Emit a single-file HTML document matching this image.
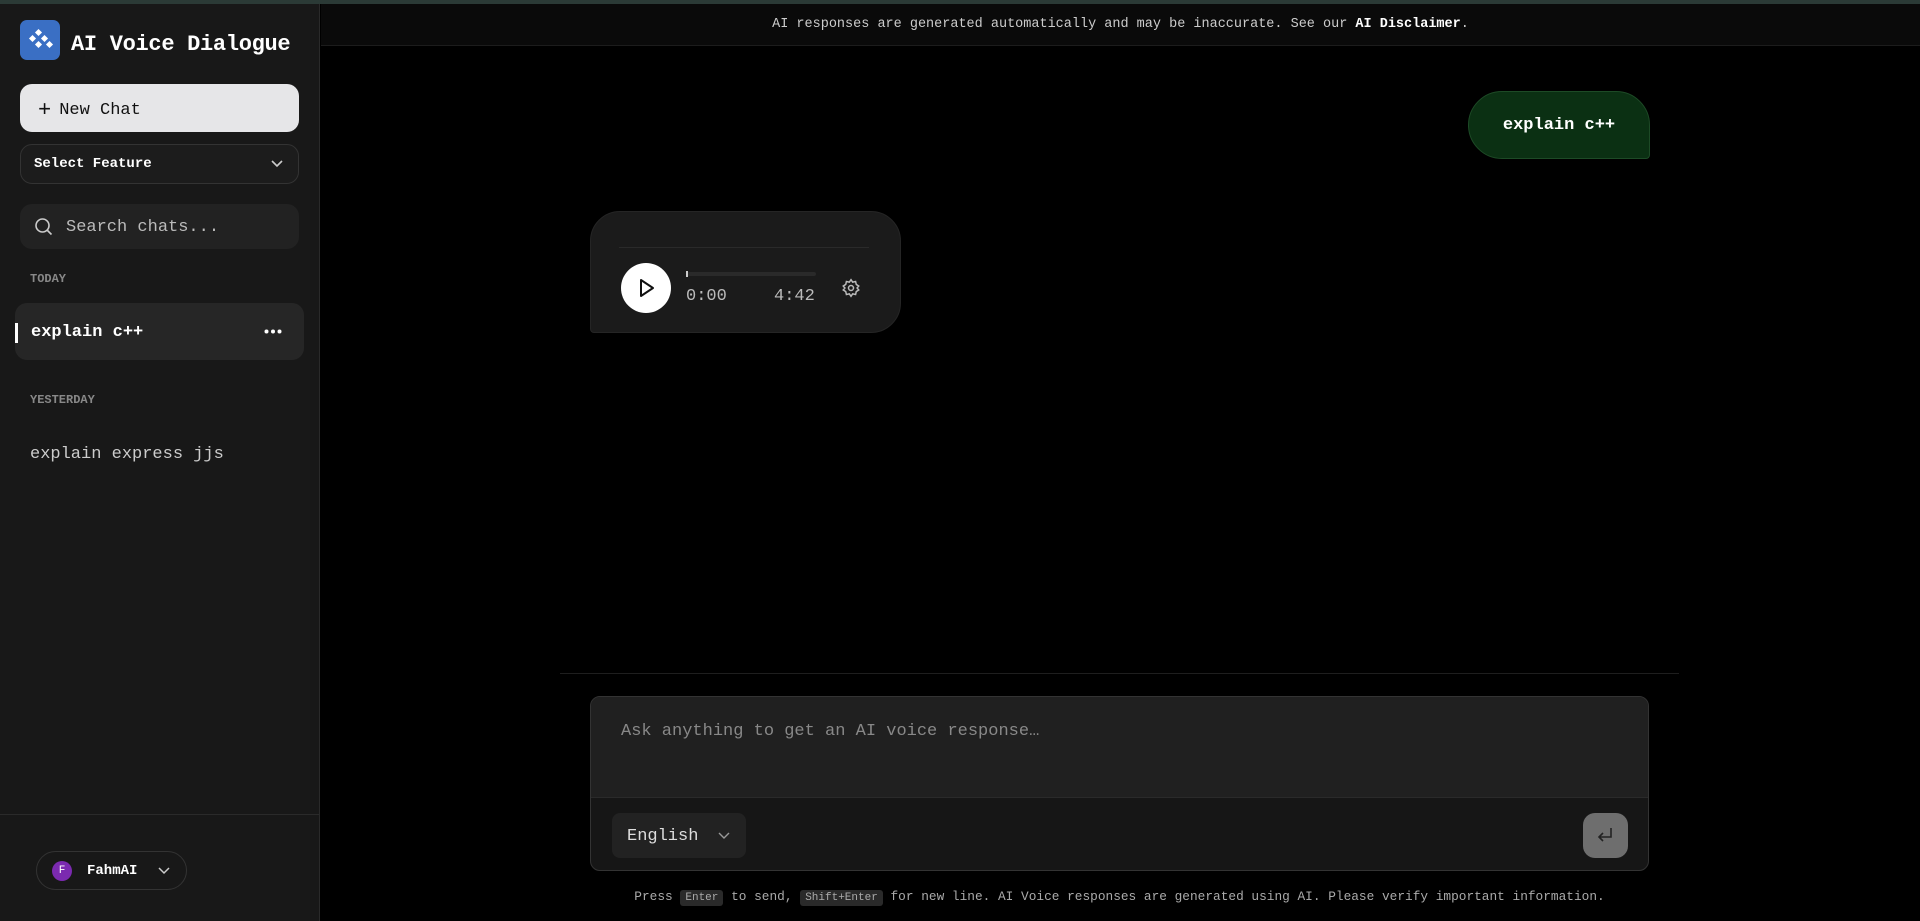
<!DOCTYPE html>
<html><head><meta charset="utf-8"><style>
*{box-sizing:border-box;margin:0;padding:0}
body{width:1920px;height:921px;background:#000;font-family:"Liberation Mono",monospace;color:#fff;overflow:hidden;position:relative}
.topline{position:absolute;left:0;top:0;width:1920px;height:4px;background:#2b3a36}
.side{position:absolute;left:0;top:4px;width:320px;height:917px;background:#181818;border-right:1px solid #2a2a2a}
.abs{position:absolute}
.logo{left:20px;top:16px;width:40px;height:40px;background:#3a6fc4;border-radius:7px}
.title{left:71px;top:28px;font-size:22px;font-weight:bold;letter-spacing:-0.3px}
.newchat{left:20px;top:80px;width:279px;height:48px;background:#e6e6e8;border-radius:12px;color:#111;font-size:17px;padding:14px 0 0 18px}
.sel{left:20px;top:140px;width:279px;height:40px;border:1px solid #333;border-radius:12px;background:#1c1c1c;font-size:14px;font-weight:bold;padding:11px 0 0 13px}
.search{left:20px;top:200px;width:279px;height:45px;background:#222;border-radius:12px;font-size:17px;color:#bbb;padding:14px 0 0 46px}
.lbl{font-size:12px;font-weight:bold;color:#888;left:30px}
.item{left:15px;top:299px;width:289px;height:57px;background:#262626;border-radius:12px;font-size:17px;font-weight:bold;padding:20px 0 0 16px}
.main-top{position:absolute;left:321px;top:4px;right:0;height:42px;background:#0a0a0a;border-bottom:1px solid #1c1c1c;text-align:center;font-size:13.5px;color:#ccc;padding-top:13px}
</style></head><body>
<div class="topline"></div>
<div class="side">
 <div class="abs logo"><svg width="40" height="40" viewBox="0 0 40 40"><g fill="#fff"><rect x="16" y="10" width="5" height="5" transform="rotate(45 18.5 12.5)"/><rect x="10" y="16" width="5" height="5" transform="rotate(45 12.5 18.5)"/><rect x="22" y="16" width="5" height="5" transform="rotate(45 24.5 18.5)"/><rect x="16" y="22" width="5" height="5" transform="rotate(45 18.5 24.5)"/><rect x="27" y="22" width="5" height="5" transform="rotate(45 29.5 24.5)"/></g></svg></div>
 <div class="abs title">AI Voice Dialogue</div>
 <div class="abs newchat"><span style="font-size:22px;vertical-align:-2px;margin-right:8px">+</span>New Chat</div>
 <div class="abs sel">Select Feature<svg class="abs" style="right:14px;top:14px" width="14" height="10" viewBox="0 0 14 10"><path d="M2 2l5 5 5-5" stroke="#ccc" stroke-width="1.6" fill="none"/></svg></div>
 <div class="abs search"><svg class="abs" style="left:14px;top:13px" width="20" height="20" viewBox="0 0 20 20"><circle cx="8.5" cy="8.5" r="6.5" stroke="#ccc" stroke-width="1.6" fill="none"/><path d="M13.5 13.5l4 4" stroke="#ccc" stroke-width="1.6"/></svg>Search chats...</div>
 <div class="abs lbl" style="top:268px">TODAY</div>
 <div class="abs item">explain c++<svg class="abs" style="right:22px;top:26px" width="18" height="5" viewBox="0 0 18 5"><circle cx="2.5" cy="2.5" r="2" fill="#fff"/><circle cx="9" cy="2.5" r="2" fill="#fff"/><circle cx="15.5" cy="2.5" r="2" fill="#fff"/></svg></div>
 <div class="abs" style="left:15px;top:319px;width:3px;height:20px;background:#fff"></div>
 <div class="abs lbl" style="top:389px">YESTERDAY</div>
 <div class="abs" style="left:30px;top:441px;font-size:17px;color:#ccc">explain express jjs</div>
 <div class="abs" style="left:0;top:810px;width:320px;height:1px;background:#2a2a2a"></div>
 <div class="abs" style="left:36px;top:847px;width:151px;height:39px;border:1px solid #333;border-radius:20px;font-size:14px;font-weight:bold;padding:11px 0 0 50px"><div class="abs" style="left:15px;top:9px;width:20px;height:20px;border-radius:50%;background:#7b2ab0;font-size:11px;text-align:center;line-height:20px;font-weight:normal">F</div>FahmAI<svg class="abs" style="right:16px;top:15px" width="12" height="8" viewBox="0 0 12 8"><path d="M1 1l5 5 5-5" stroke="#ccc" stroke-width="1.5" fill="none"/></svg></div>
</div>
<div class="main-top">AI responses are generated automatically and may be inaccurate. See our <b style="color:#fff">AI Disclaimer</b>.</div>
<div class="abs" style="left:1468px;top:91px;width:182px;height:68px;background:#0b3013;border:1px solid #1d4a26;border-radius:34px 34px 4px 34px;font-size:17px;font-weight:bold;text-align:center;line-height:68px">explain c++</div>
<div class="abs" style="left:590px;top:211px;width:311px;height:122px;background:#1b1b1b;border:1px solid #252525;border-radius:30px 30px 30px 4px">
 <div class="abs" style="left:28px;top:35px;width:250px;height:1px;background:#2a2a2a"></div>
 <div class="abs" style="left:30px;top:51px;width:50px;height:50px;border-radius:50%;background:#fff"><svg width="50" height="50" viewBox="0 0 50 50"><path d="M20 17v16l12-8z" stroke="#111" stroke-width="2" fill="none" stroke-linejoin="round"/></svg></div>
 <div class="abs" style="left:95px;top:60px;width:130px;height:4px;background:#2a2a2a;border-radius:2px"></div>
 <div class="abs" style="left:95px;top:59px;width:2px;height:6px;background:#ccc"></div>
 <div class="abs" style="left:95px;top:75px;font-size:17px;color:#bbb">0:00</div>
 <div class="abs" style="left:183px;top:75px;font-size:17px;color:#bbb">4:42</div>
 <svg class="abs" style="left:250px;top:66px" width="20" height="20" viewBox="0 0 24 24" fill="none" stroke="#bbb" stroke-width="1.8"><circle cx="12" cy="12" r="3"/><path d="M12 2l2 3 3.5-.8.8 3.5 3 2-2 2.3 2 2.3-3 2-.8 3.5-3.5-.8-2 3-2-3-3.5.8-.8-3.5-3-2 2-2.3-2-2.3 3-2 .8-3.5L10 5z"/></svg>
</div>
<div class="abs" style="left:560px;top:673px;width:1119px;height:1px;background:#1e1e1e"></div>
<div class="abs" style="left:590px;top:696px;width:1059px;height:175px;background:#161616;border:1px solid #333;border-radius:10px;overflow:hidden">
 <div class="abs" style="left:0;top:0;width:100%;height:101px;background:#202020;border-bottom:1px solid #2a2a2a"></div>
 <div class="abs" style="left:30px;top:25px;font-size:17px;color:#888">Ask anything to get an AI voice response…</div>
 <div class="abs" style="left:21px;top:116px;width:134px;height:45px;background:#222;border-radius:8px;font-size:17px;color:#ddd;padding:14px 0 0 15px">English<svg class="abs" style="right:16px;top:19px" width="12" height="8" viewBox="0 0 12 8"><path d="M1 1l5 5 5-5" stroke="#999" stroke-width="1.4" fill="none"/></svg></div>
 <div class="abs" style="left:992px;top:116px;width:45px;height:45px;background:#6e6e6e;border-radius:12px"><svg width="45" height="45" viewBox="0 0 45 45"><path d="M28 15v9H17m3-4l-4 4 4 4" stroke="#222" stroke-width="1.6" fill="none"/></svg></div>
</div>
<div class="abs" style="left:560px;top:889px;width:1119px;text-align:center;font-size:12.8px;color:#aaa">Press <span style="background:#2a2a2a;padding:2px 5px;border-radius:3px;font-size:11px">Enter</span> to send, <span style="background:#2a2a2a;padding:2px 5px;border-radius:3px;font-size:11px">Shift+Enter</span> for new line. AI Voice responses are generated using AI. Please verify important information.</div>
</body></html>
